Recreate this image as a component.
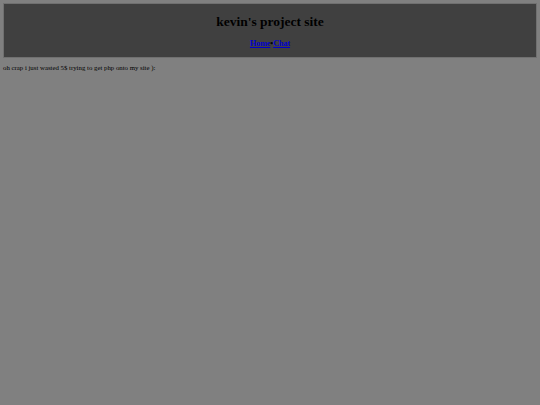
import React from 'react';

export default function App() {
  return (
    <div className="min-h-[405px] bg-[#808080] p-[3px] font-['Liberation_Serif',serif] text-black">
      <div className="border border-[#707070] bg-[#404040] pt-[10px] pb-[8px] text-center">
        <h1 className="text-[13.5px] font-bold leading-[16px]">kevin's project site</h1>
        <div className="mt-[9px] text-[8px] font-bold leading-[10px]">
          <a href="#" className="text-[#0000cc] underline">Home</a>
          <span>•</span>
          <a href="#" className="text-[#0000cc] underline">Chat</a>
        </div>
      </div>
      <p className="mt-[6px] text-[6.8px] leading-[8px]">oh crap i just wasted 5$ trying to get php onto my site ):</p>
    </div>
  );
}
